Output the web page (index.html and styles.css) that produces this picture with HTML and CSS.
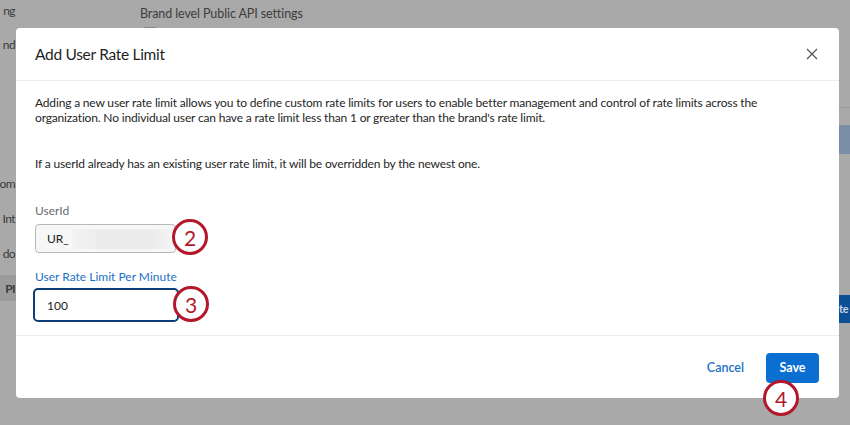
FILE: index.html
```
<!DOCTYPE html>
<html>
<head>
<meta charset="utf-8">
<link rel="stylesheet" href="styles.css">
</head>
<body>
<div class="page">
  <div class="sidebar">
    <div class="side-item s1">ng</div>
    <div class="side-item s2">nd</div>
    <div class="side-item s3">om</div>
    <div class="side-item s4">Int</div>
    <div class="side-item s5">do</div>
    <div class="side-item s6 active">PI</div>
  </div>
  <div class="main">
    <div class="main-title">Brand level Public API settings</div>
    <div class="checkbox"></div>
  </div>
  <div class="right-edge">
    <div class="edge-line"></div>
    <div class="edge-block"></div>
    <div class="edge-btn">te</div>
  </div>

  <div class="modal">
    <div class="modal-header">
      <div class="modal-title">Add User Rate Limit</div>
      <svg class="close" width="12" height="12" viewBox="0 0 12 12"><path d="M1 1L11 11M11 1L1 11" stroke="#555" stroke-width="1.3" fill="none"/></svg>
    </div>
    <div class="modal-body">
      <p class="desc">Adding a new user rate limit allows you to define custom rate limits for users to enable better management and control of rate limits across the organization. No individual user can have a rate limit less than 1 or greater than the brand's rate limit.</p>
      <p class="desc note">If a userId already has an existing user rate limit, it will be overridden by the newest one.</p>
      <div class="field">
        <div class="label">UserId</div>
        <div class="input input-user"><span>UR_</span><span class="redact"></span></div>
      </div>
      <div class="field field2">
        <div class="label label-active">User Rate Limit Per Minute</div>
        <div class="input input-focus"><span>100</span></div>
      </div>
    </div>
    <div class="modal-footer">
      <span class="cancel">Cancel</span>
      <span class="save">Save</span>
    </div>
  </div>

  <div class="badge b2">2</div>
  <div class="badge b3">3</div>
  <div class="badge b4">4</div>
</div>
</body>
</html>
```
FILE: styles.css
```
* { box-sizing: border-box; }
html, body { margin: 0; padding: 0; }
body {
  font-family: Lato, "Open Sans", sans-serif;
  width: 850px;
  height: 425px;
  overflow: hidden;
}
.page {
  position: relative;
  width: 850px;
  height: 425px;
  background: #a9a9a9;
  display: flex;
  overflow: hidden;
}
.sidebar {
  width: 16px;
  flex: none;
  display: flex;
  flex-direction: column;
  font-size: 12px;
  letter-spacing: -0.6px;
  color: #3b3b3b;
}
.side-item {
  display: flex;
  justify-content: flex-end;
  white-space: nowrap;
  height: 26px;
  align-items: center;
  padding-right: 1px;
}
.s1 { margin-top: -3px; }
.s2 { margin-top: 8px; }
.s3 { margin-top: 113px; }
.s4 { margin-top: 9px; }
.s5 { margin-top: 9px; }
.s6 { margin-top: 9px; font-weight: 700; background: #9b9b9b; }
.main {
  flex: 1;
  padding-left: 124px;
  padding-top: 5px;
}
.main-title {
  font-size: 12.5px;
  color: #3d3d3d;
  line-height: 18px;
  letter-spacing: -0.1px;
}
.checkbox {
  margin-top: 4px;
  margin-left: 3px;
  width: 14px;
  height: 14px;
  border: 1px solid #8a8a8a;
  border-radius: 2px;
}
.right-edge {
  width: 11px;
  flex: none;
  padding-top: 107px;
}
.edge-line { height: 1px; background: #9a9a9a; }
.edge-block { margin-top: 17px; height: 29px; background: #7b8ea8; }
.edge-btn {
  margin-top: 141px;
  height: 28px;
  background: #0b4f94;
  color: #c9d5e3;
  font-size: 11px;
  letter-spacing: -0.3px;
  font-weight: 700;
  line-height: 28px;
  overflow: hidden;
}

.modal {
  position: absolute;
  left: 16px;
  top: 28px;
  width: 823px;
  height: 370px;
  background: #fff;
  border-radius: 4px;
  display: flex;
  flex-direction: column;
}
.modal-header {
  height: 53px;
  flex: none;
  display: flex;
  align-items: center;
  justify-content: space-between;
  padding: 0 21px 0 19px;
  border-bottom: 1px solid #ececec;
}
.modal-title {
  font-size: 15.5px;
  letter-spacing: -0.3px;
  color: #1f1f1f;
}
.close { display: block; }
.modal-body {
  flex: 1;
  padding: 14px 19px 0;
  border-bottom: 1px solid #ececec;
}
.desc {
  margin: 0;
  font-size: 12px;
  line-height: 15px;
  letter-spacing: -0.17px;
  color: #262626;
}
.note { margin-top: 31px; }
.field { margin-top: 32px; }
.field2 { margin-top: 16px; }
.label {
  font-size: 12px;
  line-height: 16px;
  color: #6b6b6b;
}
.label-active { color: #1b6fc8; }
.input {
  display: flex;
  align-items: center;
  font-size: 12px;
  color: #222;
}
.input-user {
  margin-top: 5px;
  width: 141px;
  height: 29px;
  border: 1px solid #b8b8b8;
  border-radius: 4px;
  background: #f7f7f7;
  padding-left: 11px;
}
.redact {
  margin-left: 3px;
  width: 100px;
  height: 20px;
  background: linear-gradient(90deg, #f3f3f3, #ebebeb 30%, #ececec 80%, #f4f4f4);
}
.input-focus {
  margin-top: 3px;
  margin-left: -2px;
  width: 146px;
  height: 34px;
  border: 2px solid #0c3e79;
  border-radius: 5px;
  background: #fff;
  padding-left: 12px;
}
.modal-footer {
  height: 62px;
  flex: none;
  display: flex;
  align-items: center;
  justify-content: flex-end;
  padding: 0 20px 0 0;
  gap: 22px;
  font-size: 12.5px;
}
.cancel { color: #1b6fc8; font-weight: 600; }
.save {
  background: #0b6ed1;
  color: #fff;
  font-weight: 700;
  width: 53px;
  height: 30px;
  border-radius: 4px;
  display: flex;
  align-items: center;
  justify-content: center;
  margin-top: 1px;
}
.badge {
  position: absolute;
  width: 36px;
  height: 36px;
  border: 3px solid #b3172a;
  border-radius: 50%;
  background: #fff;
  color: #b3172a;
  font-size: 21px;
  display: flex;
  align-items: center;
  justify-content: center;
  line-height: 1;
}
.b2 { left: 172px; top: 219px; }
.b3 { left: 173px; top: 286px; }
.b4 { left: 763px; top: 380px; }
```
